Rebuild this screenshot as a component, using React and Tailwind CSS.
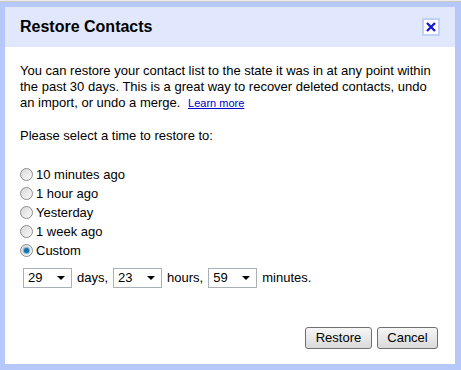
import React from 'react';

const options = ['10 minutes ago', '1 hour ago', 'Yesterday', '1 week ago', 'Custom'];

function Radio({ checked }) {
  return (
    <span className="relative inline-block w-[13px] h-[13px] rounded-full border border-[#8d8d8d] bg-gradient-to-br from-[#d8d8d8] to-[#fafafa]">
      {checked && (
        <span className="absolute left-[3px] top-[3px] w-[5px] h-[5px] rounded-full bg-[#1b6fa8] shadow-[0_0_1px_1px_#6fb0dd]" />
      )}
    </span>
  );
}

function Select({ value }) {
  return (
    <span className="flex items-center justify-between w-[49px] h-[20px] border border-[#a9b0b8] bg-white pl-[4px] pr-[6px]">
      <span>{value}</span>
      <svg width="8" height="4" viewBox="0 0 8 4">
        <path d="M0 0h8L4 4z" fill="#000" />
      </svg>
    </span>
  );
}

function Button({ children, width }) {
  return (
    <button className={`${width} h-[22px] rounded-[3px] border border-[#707070] bg-gradient-to-b from-[#f6f6f6] to-[#dadada] text-[13px] text-black`}>
      {children}
    </button>
  );
}

export default function App() {
  return (
    <div className="w-[461px] h-[370px] bg-[#b6c7f9] flex flex-col font-['Liberation_Sans',Arial,sans-serif] text-[13px] text-black overflow-hidden">
      <div className="h-[2px] bg-[#ececec] border-b border-[#c8c8c8]" />
      <div className="mt-[5px] ml-[5px] mr-[6px] h-[357px] bg-white flex flex-col">
        <div className="h-[40px] bg-[#e1e8fd] flex items-center justify-between pl-[15px] pr-[15px]">
          <h1 className="text-[16px] font-bold">Restore Contacts</h1>
          <span className="w-[18px] h-[18px] border-2 border-[#c3d0f6] bg-white flex items-center justify-center">
            <svg width="10" height="10" viewBox="0 0 10 10">
              <path d="M1 1L9 9M9 1L1 9" stroke="#1a1ad0" strokeWidth="2.4" />
            </svg>
          </span>
        </div>
        <div className="flex flex-col px-[15px] pt-[16px] leading-[16px]">
          <p>
            You can restore your contact list to the state it was in at any point within the past 30 days. This is a great way to recover deleted contacts, undo an import, or undo a merge.{' '}
            <a className="ml-[4px] text-[11px] leading-[14px] text-[#0000cc] underline">Learn more</a>
          </p>
          <p className="mt-[17px]">Please select a time to restore to:</p>
          <div className="mt-[21px] flex flex-col">
            {options.map((o, i) => (
              <label key={o} className="flex items-center h-[19px] gap-[3px]">
                <Radio checked={i === 4} />
                <span>{o}</span>
              </label>
            ))}
          </div>
          <div className="mt-[8px] ml-[3px] flex items-center gap-[5px]">
            <Select value="29" />
            <span>days,</span>
            <Select value="23" />
            <span>hours,</span>
            <Select value="59" />
            <span>minutes.</span>
          </div>
        </div>
        <div className="mt-auto mb-[15px] mr-[17px] flex justify-end gap-[5px]">
          <Button width="w-[67px]">Restore</Button>
          <Button width="w-[61px]">Cancel</Button>
        </div>
      </div>
    </div>
  );
}
